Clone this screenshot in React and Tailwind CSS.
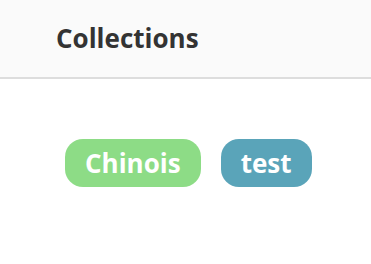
import React from 'react';

const App = () => {
  const tags = [
    { name: 'Chinois', color: 'bg-[#8ddc86]' },
    { name: 'test', color: 'bg-[#5aa4b9]' },
  ];

  return (
    <div className="min-h-screen bg-white font-['Open_Sans',sans-serif]">
      {/* Header */}
      <header className="h-[79px] bg-[#fafafa] border-b-2 border-[#dddddd] pl-[56px] flex items-center">
        <h1 className="text-[26px] font-bold text-[#333333] leading-none pb-[2px]">Collections</h1>
      </header>

      {/* Tags */}
      <div className="flex gap-[20px] pl-[65px] pt-[60px]">
        {tags.map((tag) => (
          <span
            key={tag.name}
            className={`${tag.color} h-[48px] px-[20px] rounded-[18px] flex items-center text-white text-[26px] font-bold leading-none`}
          >
            {tag.name}
          </span>
        ))}
      </div>
    </div>
  );
};

export default App;
